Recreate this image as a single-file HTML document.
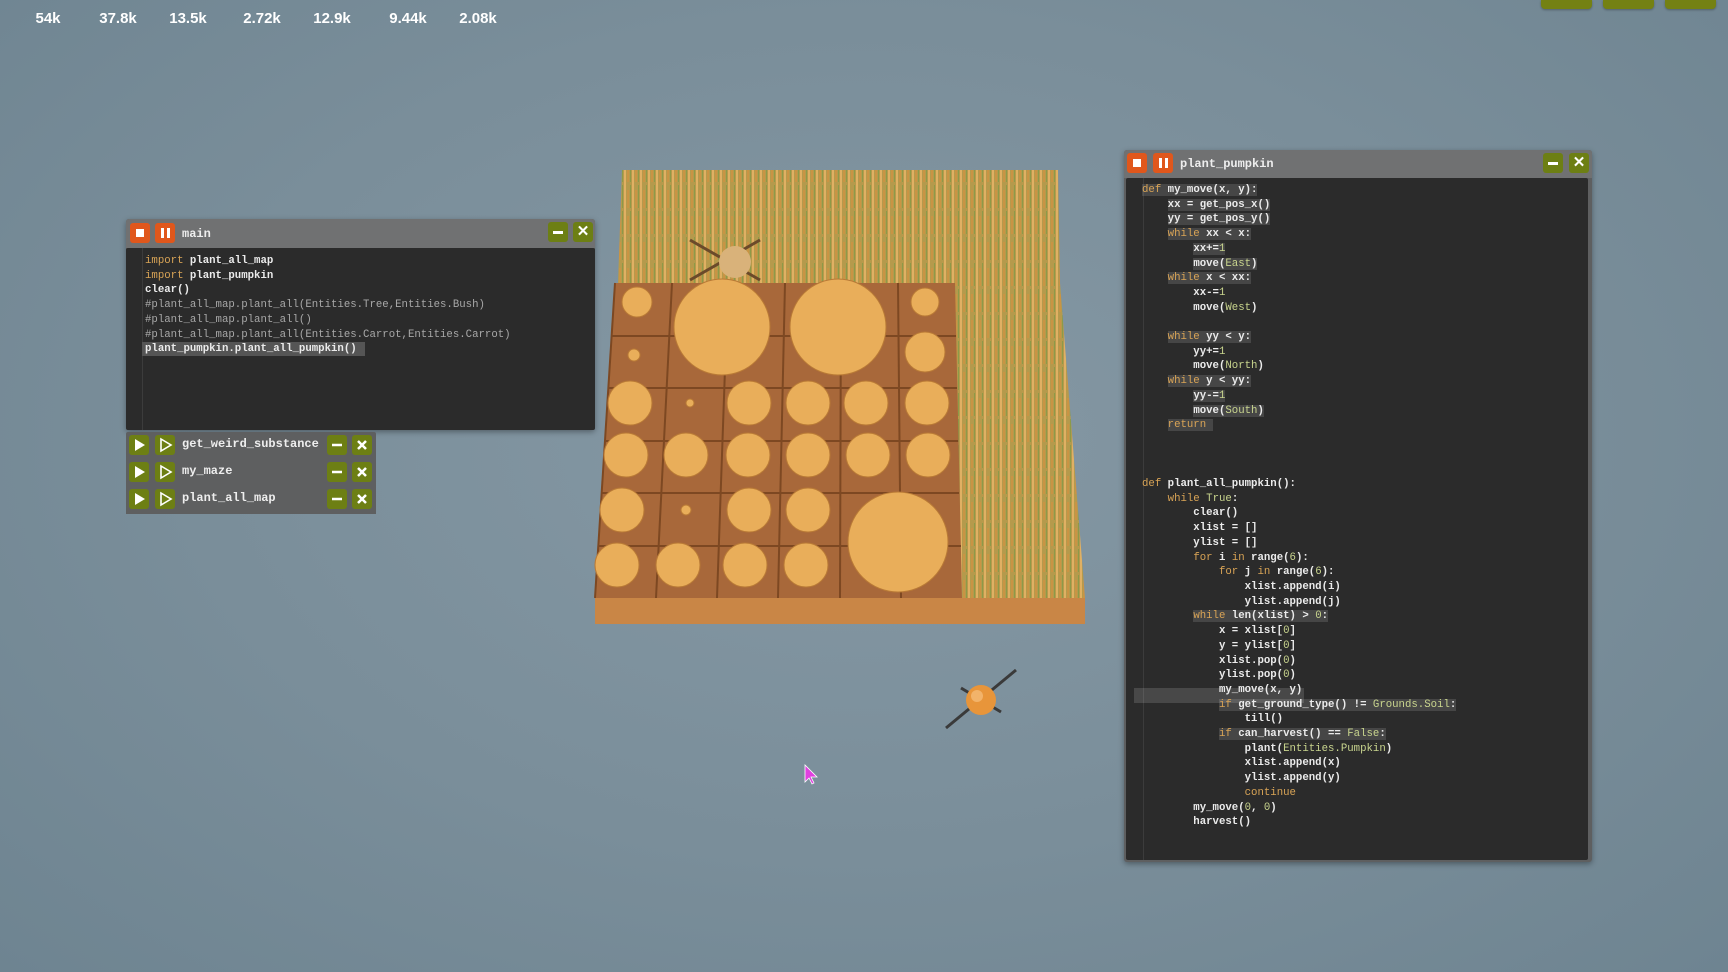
<!DOCTYPE html>
<html><head><meta charset="utf-8"><style>
*{margin:0;padding:0;box-sizing:border-box}
body{width:1728px;height:972px;overflow:hidden;position:relative;background:radial-gradient(ellipse at 50% 45%,#8598a4 0%,#7a8e9a 55%,#6e8491 100%);font-family:"Liberation Sans",sans-serif}
.num{position:absolute;top:10px;color:#fff;font-weight:bold;font-size:15px;transform:translateX(-50%)}
.tb{position:absolute;top:0;height:9px;width:51px;background:#748113;border-radius:0 0 4px 4px;box-shadow:0 1px 2px rgba(0,0,0,.3)}
.win{position:absolute;background:#5e5f60;border-radius:3px;box-shadow:0 2px 6px rgba(0,0,0,.35)}
.title{position:absolute;left:0;right:0;top:0;background:#707172;border-radius:3px 3px 0 0}
.ttl{position:absolute;color:#eee;font:bold 12px "Liberation Mono",monospace}
.btn{position:absolute;width:20px;height:20px;border-radius:3px}
.or{background:#e0571c}.gr{background:#6d7f14}
.code{position:absolute;background:#2b2b2b;border-radius:2px}
.gut{position:absolute;top:0;bottom:0;width:1px;background:#3c3c3c}
pre{position:absolute;font:bold 10.7px/14.7px "Liberation Mono",monospace;color:#ebebeb;white-space:pre}
.k{color:#d9a456;font-weight:normal}.c{color:#a8a8a8;font-weight:normal}.g{color:#c9d58e;font-weight:normal}
.h{background:rgba(255,255,255,.13)}
.row{position:absolute;left:126px;width:250px;height:26px;background:#5e5f60}
</style></head><body>
<div class="num" style="left:48px">54k</div>
<div class="num" style="left:118px">37.8k</div>
<div class="num" style="left:188px">13.5k</div>
<div class="num" style="left:262px">2.72k</div>
<div class="num" style="left:332px">12.9k</div>
<div class="num" style="left:408px">9.44k</div>
<div class="num" style="left:478px">2.08k</div>
<div class="tb" style="left:1541px"></div><div class="tb" style="left:1603px"></div><div class="tb" style="left:1665px"></div>

<svg style="position:absolute;left:0;top:0" width="1728" height="972">
<defs>
<pattern id="wh" width="8" height="26" patternUnits="userSpaceOnUse">
<rect width="8" height="26" fill="#b59a4c"/>
<rect x="0" y="0" width="2" height="26" fill="#e0b063"/><rect x="3" y="8" width="2" height="18" fill="#c99444"/><rect x="6" y="3" width="1" height="23" fill="#8d9a48"/>
</pattern>
</defs>
<polygon points="622,170 1058,170 1060,283 953,283 962,598 1085,598 1085,610 595,610 615,283 618,283" fill="url(#wh)"/>
<polygon points="953,283 1060,283 1085,598 962,598" fill="url(#wh)"/>
<polygon points="615,283 955,283 962,598 595,598" fill="#a8683a"/>
<g stroke="#7d4822" stroke-width="2" fill="none">
<line x1="615" y1="283" x2="595" y2="598"/><line x1="672" y1="283" x2="656" y2="598"/><line x1="728" y1="283" x2="717" y2="598"/><line x1="785" y1="283" x2="778" y2="598"/><line x1="841" y1="283" x2="840" y2="598"/><line x1="898" y1="283" x2="901" y2="598"/>
<line x1="612" y1="336" x2="956" y2="336"/><line x1="609" y1="388" x2="957" y2="388"/><line x1="605" y1="441" x2="958" y2="441"/><line x1="602" y1="493" x2="959" y2="493"/><line x1="599" y1="546" x2="961" y2="546"/>
</g>
<polygon points="595,598 1085,598 1085,624 595,624" fill="#c98646"/>
<g fill="#e9ae5a" stroke="#b97a36" stroke-width="1">
<circle cx="637" cy="302" r="15"/><circle cx="722" cy="327" r="48"/><circle cx="838" cy="327" r="48"/><circle cx="925" cy="302" r="14"/>
<circle cx="634" cy="355" r="6"/><circle cx="925" cy="352" r="20"/>
<circle cx="630" cy="403" r="22"/><circle cx="690" cy="403" r="4"/><circle cx="749" cy="403" r="22"/><circle cx="808" cy="403" r="22"/><circle cx="866" cy="403" r="22"/><circle cx="927" cy="403" r="22"/>
<circle cx="626" cy="455" r="22"/><circle cx="686" cy="455" r="22"/><circle cx="748" cy="455" r="22"/><circle cx="808" cy="455" r="22"/><circle cx="868" cy="455" r="22"/><circle cx="928" cy="455" r="22"/>
<circle cx="622" cy="510" r="22"/><circle cx="686" cy="510" r="5"/><circle cx="749" cy="510" r="22"/><circle cx="808" cy="510" r="22"/><circle cx="898" cy="542" r="50"/>
<circle cx="617" cy="565" r="22"/><circle cx="678" cy="565" r="22"/><circle cx="745" cy="565" r="22"/><circle cx="806" cy="565" r="22"/>
</g>
<g stroke="#6b4a2a" stroke-width="3" fill="none"><path d="M690,240 L760,280 M760,240 L690,280"/></g>
<circle cx="735" cy="262" r="16" fill="#d9b27a"/>
<g transform="translate(981,700)">
<path d="M-35,28 L35,-30 M-20,-12 L20,12" stroke="#3a3a3a" stroke-width="3"/>
<circle cx="0" cy="0" r="15" fill="#e8953a"/><circle cx="-4" cy="-4" r="6" fill="#f2b36a"/>
</g>
<path d="M805,765 l0,17 l4,-4 l3,6 l2,-1 l-3,-6 l6,0 z" fill="#e040e0" stroke="#fff" stroke-width="0.8"/>
</svg>

<div class="win" style="left:126px;top:219px;width:469px;height:211px">
<div class="title" style="height:29px"></div>
<div class="btn or" style="left:4px;top:4px"></div>
<div class="btn or" style="left:29px;top:4px"></div>
<div style="position:absolute;left:10px;top:10px;width:8px;height:8px;background:#fff"></div>
<div style="position:absolute;left:35px;top:9px;width:3px;height:10px;background:#fff"></div><div style="position:absolute;left:41px;top:9px;width:3px;height:10px;background:#fff"></div>
<div class="ttl" style="left:56px;top:8px">main</div>
<div class="btn gr" style="left:422px;top:3px"></div><div style="position:absolute;left:427px;top:12px;width:10px;height:3px;background:#fff"></div>
<div class="btn gr" style="left:447px;top:3px;color:#fff;font:bold 15px/20px 'Liberation Sans';text-align:center">✕</div>
<div class="code" style="left:0;top:29px;width:469px;height:182px"><div class="gut" style="left:16px"></div></div>
<pre style="left:19px;top:35px"><span class="k">import</span> plant_all_map
<span class="k">import</span> plant_pumpkin
clear()
<span class="c">#plant_all_map.plant_all(Entities.Tree,Entities.Bush)</span>
<span class="c">#plant_all_map.plant_all()</span>
<span class="c">#plant_all_map.plant_all(Entities.Carrot,Entities.Carrot)</span>
<span style="background:#555;padding:1px 8px 1px 3px;margin-left:-3px">plant_pumpkin.plant_all_pumpkin()</span></pre>
</div>

<div class="row" style="top:432px;border-radius:2px 2px 0 0"></div>
<div class="row" style="top:458px"></div>
<div class="row" style="top:484px;height:30px"></div>
<div style="position:absolute;left:126px;top:432px">
<div style="position:relative">
<div class="btn gr" style="left:3px;top:3px"></div><div class="btn gr" style="left:29px;top:3px"></div>
<div class="btn gr" style="left:201px;top:3px"></div><div class="btn gr" style="left:226px;top:3px"></div>
<div class="btn gr" style="left:3px;top:30px"></div><div class="btn gr" style="left:29px;top:30px"></div>
<div class="btn gr" style="left:201px;top:30px"></div><div class="btn gr" style="left:226px;top:30px"></div>
<div class="btn gr" style="left:3px;top:57px"></div><div class="btn gr" style="left:29px;top:57px"></div>
<div class="btn gr" style="left:201px;top:57px"></div><div class="btn gr" style="left:226px;top:57px"></div>
</div>
<svg style="position:absolute;left:0;top:0" width="250" height="82">
<g fill="#fff"><path d="M9,7 l10,6 l-10,6z M9,34 l10,6 l-10,6z M9,61 l10,6 l-10,6z"/></g>
<g fill="none" stroke="#fff" stroke-width="1.6"><path d="M35,7 l10,6 l-10,6z M35,34 l10,6 l-10,6z M35,61 l10,6 l-10,6z"/></g>
<g stroke="#fff" stroke-width="2.5"><path d="M206,13h10 M206,40h10 M206,67h10"/>
<path d="M232,9l8,8M240,9l-8,8 M232,36l8,8M240,36l-8,8 M232,63l8,8M240,63l-8,8"/></g>
</svg>
</div>
<div class="ttl" style="left:182px;top:437px">get_weird_substance</div>
<div class="ttl" style="left:182px;top:464px">my_maze</div>
<div class="ttl" style="left:182px;top:491px">plant_all_map</div>

<div class="win" style="left:1124px;top:150px;width:468px;height:712px">
<div class="title" style="height:28px"></div>
<div class="btn or" style="left:3px;top:3px"></div>
<div class="btn or" style="left:29px;top:3px"></div>
<div style="position:absolute;left:9px;top:9px;width:8px;height:8px;background:#fff"></div>
<div style="position:absolute;left:35px;top:8px;width:3px;height:10px;background:#fff"></div><div style="position:absolute;left:41px;top:8px;width:3px;height:10px;background:#fff"></div>
<div class="ttl" style="left:56px;top:7px">plant_pumpkin</div>
<div class="btn gr" style="left:419px;top:3px"></div><div style="position:absolute;left:424px;top:12px;width:10px;height:3px;background:#fff"></div>
<div class="btn gr" style="left:445px;top:3px;color:#fff;font:bold 15px/20px 'Liberation Sans';text-align:center">✕</div>
<div class="code" style="left:2px;top:28px;width:462px;height:682px"><div class="gut" style="left:17px"></div></div>
<div style="position:absolute;left:10px;top:538px;width:170px;height:15px;background:rgba(255,255,255,.14)"></div>
<pre style="left:18px;top:33px"><span class="h"><span class="k">def</span> my_move(x, y):</span>
    <span class="h">xx = get_pos_x()</span>
    <span class="h">yy = get_pos_y()</span>
    <span class="h"><span class="k">while</span> xx &lt; x:</span>
        <span class="h">xx+=<span class="g">1</span></span>
        <span class="h">move(<span class="g">East</span>)</span>
    <span class="h"><span class="k">while</span> x &lt; xx:</span>
        xx-=<span class="g">1</span>
        move(<span class="g">West</span>)

    <span class="h"><span class="k">while</span> yy &lt; y:</span>
        yy+=<span class="g">1</span>
        move(<span class="g">North</span>)
    <span class="h"><span class="k">while</span> y &lt; yy:</span>
        <span class="h">yy-=<span class="g">1</span></span>
        <span class="h">move(<span class="g">South</span>)</span>
    <span class="h"><span class="k">return</span> </span>



<span class="k">def</span> plant_all_pumpkin():
    <span class="k">while</span> <span class="g">True</span>:
        clear()
        xlist = []
        ylist = []
        <span class="k">for</span> i <span class="k">in</span> range(<span class="g">6</span>):
            <span class="k">for</span> j <span class="k">in</span> range(<span class="g">6</span>):
                xlist.append(i)
                ylist.append(j)
        <span class="h"><span class="k">while</span> len(xlist) &gt; <span class="g">0</span>:</span>
            x = xlist[<span class="g">0</span>]
            y = ylist[<span class="g">0</span>]
            xlist.pop(<span class="g">0</span>)
            ylist.pop(<span class="g">0</span>)
            my_move(x, y)
            <span class="h"><span class="k">if</span> get_ground_type() != <span class="g">Grounds.Soil</span>:</span>
                till()
            <span class="h"><span class="k">if</span> can_harvest() == <span class="g">False</span>:</span>
                plant(<span class="g">Entities.Pumpkin</span>)
                xlist.append(x)
                ylist.append(y)
                <span class="k">continue</span>
        my_move(<span class="g">0</span>, <span class="g">0</span>)
        harvest()</pre>
</div>
</body></html>
